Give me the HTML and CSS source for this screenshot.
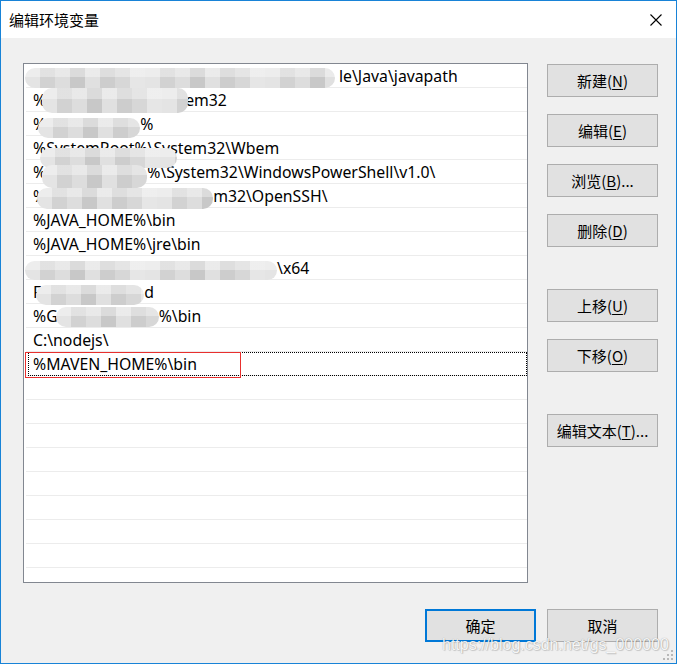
FILE: index.html
```html
<!DOCTYPE html>
<html lang="zh-CN">
<head>
<meta charset="utf-8">
<title>编辑环境变量</title>
<link rel="stylesheet" href="styles.css">
</head>
<body>
<div class="window">
  <div class="titlebar">
    <span class="title">编辑环境变量</span>
    <svg class="close" width="12" height="12" viewBox="0 0 12 12"><path d="M0.5 0.5 L11.5 11.5 M11.5 0.5 L0.5 11.5" stroke="#000" stroke-width="1.1" fill="none"/></svg>
  </div>
  <div class="body">
    <div class="main">
      <div class="list">
        <div class="row"><span class="blur b1"></span><span>le\Java\javapath</span></div>
        <div class="row"><span>%</span><span class="blur b2"></span><span>em32</span></div>
        <div class="row"><span>%</span><span class="blur b3"></span><span>%</span></div>
        <div class="row"><span>%SystemRoot%\System32\Wbem</span><span class="blur b4"></span></div>
        <div class="row"><span>%</span><span class="blur b5"></span><span>%\System32\WindowsPowerShell\v1.0\</span></div>
        <div class="row"><span>%</span><span class="blur b6"></span><span>m32\OpenSSH\</span></div>
        <div class="row"><span>%JAVA_HOME%\bin</span></div>
        <div class="row"><span>%JAVA_HOME%\jre\bin</span></div>
        <div class="row"><span class="blur b9"></span><span>\x64</span></div>
        <div class="row"><span>F</span><span class="blur b10"></span><span>d</span></div>
        <div class="row"><span>%G</span><span class="blur b11"></span><span>%\bin</span></div>
        <div class="row"><span>C:\nodejs\</span></div>
        <div class="row focused"><span>%MAVEN_HOME%\bin</span><span class="mark"></span></div>
        <div class="row"></div>
        <div class="row"></div>
        <div class="row"></div>
        <div class="row"></div>
        <div class="row"></div>
        <div class="row"></div>
        <div class="row"></div>
        <div class="row"></div>
      </div>
      <div class="side">
        <div class="group">
          <button class="btn">新建(<u>N</u>)</button>
          <button class="btn">编辑(<u>E</u>)</button>
          <button class="btn">浏览(<u>B</u>)...</button>
          <button class="btn">删除(<u>D</u>)</button>
        </div>
        <div class="group">
          <button class="btn">上移(<u>U</u>)</button>
          <button class="btn">下移(<u>O</u>)</button>
        </div>
        <div class="group">
          <button class="btn">编辑文本(<u>T</u>)...</button>
        </div>
      </div>
    </div>
    <div class="footer">
      <button class="btn default">确定</button>
      <button class="btn">取消</button>
    </div>
  </div>
  <div class="watermark">https://blog.csdn.net/gs_000000</div>
  <svg class="grip" width="12" height="12" viewBox="0 0 12 12">
    <rect x="9" y="1" width="2" height="2" fill="#b8b8b8"/>
    <rect x="5" y="5" width="2" height="2" fill="#b8b8b8"/>
    <rect x="9" y="5" width="2" height="2" fill="#b8b8b8"/>
    <rect x="1" y="9" width="2" height="2" fill="#b8b8b8"/>
    <rect x="5" y="9" width="2" height="2" fill="#b8b8b8"/>
    <rect x="9" y="9" width="2" height="2" fill="#b8b8b8"/>
  </svg>
</div>
</body>
</html>
```

FILE: styles.css
```css
html, body {
  margin: 0;
  padding: 0;
  background: #f0f0f0;
}

.window {
  width: 677px;
  height: 664px;
  box-sizing: border-box;
  border: 1px solid #1883d7;
  background: #f0f0f0;
  display: flex;
  flex-direction: column;
  position: relative;
  overflow: hidden;
  font-family: "Noto Sans", "Noto Sans CJK SC", sans-serif;
  color: #000;
}

.titlebar {
  height: 37px;
  background: #fff;
  display: flex;
  align-items: center;
  justify-content: space-between;
  padding: 0 14px 0 8px;
  flex: none;
}

.title {
  font-family: "Noto Sans CJK SC", sans-serif;
  font-size: 15px;
  line-height: 18px;
}

.close {
  display: block;
}

.body {
  flex: 1;
  display: flex;
  flex-direction: column;
  padding: 25px 18px 0 22px;
}

.main {
  display: flex;
  gap: 19px;
}

.list {
  width: 505px;
  height: 520px;
  box-sizing: border-box;
  border: 1px solid #828790;
  background: #fff;
  overflow: hidden;
  flex: none;
}

.row {
  position: relative;
  height: 24px;
  box-sizing: border-box;
  margin-left: 2px;
  padding-left: 7px;
  border-bottom: 1px solid #ececec;
  display: flex;
  align-items: center;
  font-size: 15.8px;
  line-height: 20px;
  white-space: nowrap;
}

.blur {
  display: block;
  flex: none;
  align-self: flex-start;
  position: relative;
  z-index: 1;
  border-radius: 10px;
  background:
    linear-gradient(rgba(255,255,255,0.35) 0 45%, rgba(255,255,255,0) 45%),
    repeating-linear-gradient(90deg, #e4e4e4 0 15px, #d2d2d2 15px 30px, #dddddd 30px 45px, #c8c8c8 45px 60px, #e0e0e0 60px 75px, #cdcdcd 75px 90px, #d7d7d7 90px 105px, #e6e6e6 105px 120px);
  filter: blur(0.7px);
}

.b1 { margin-left: -8px; margin-right: 4px; margin-top: 4px; width: 310px; height: 20px; }
.b2 { margin-left: -4px; margin-top: 0; width: 146px; height: 25px; margin-right: -3px; }
.b3 { margin-left: -8px; margin-top: 6px; width: 102px; height: 20px; }
.b4 { position: absolute; left: 14px; top: 12px; width: 137px; height: 20px; }
.b5 { margin-left: -4px; margin-top: 5px; width: 105px; height: 23px; }
.b6 { margin-left: -9px; margin-top: 4px; width: 176px; height: 21px; }
.b9 { margin-left: -8px; margin-top: 5px; width: 252px; height: 19px; }
.b10 { margin-left: -5px; margin-top: 5px; width: 108px; height: 20px; }
.b11 { margin-left: -2px; margin-top: 3px; width: 103px; height: 20px; }

.focused::before {
  content: "";
  position: absolute;
  left: 2px;
  right: 0;
  top: 0;
  bottom: -1px;
  border: 1px dotted #000;
  box-sizing: border-box;
}

.mark {
  position: absolute;
  left: -1px;
  top: 0;
  width: 216px;
  height: 26px;
  box-sizing: border-box;
  border: 1px solid #e8302e;
  z-index: 2;
}

.side {
  display: flex;
  flex-direction: column;
  gap: 42px;
  padding-top: 1px;
}

.group {
  display: flex;
  flex-direction: column;
  gap: 17px;
}

.btn {
  width: 111px;
  height: 33px;
  box-sizing: border-box;
  border: 1px solid #adadad;
  background: #e1e1e1;
  font-family: "Noto Sans CJK SC", sans-serif;
  font-size: 15px;
  color: #000;
  padding: 0;
  margin: 0;
  display: flex;
  align-items: center;
  justify-content: center;
  line-height: 18px;
}

.btn u {
  text-underline-offset: 2px;
}

.btn.default {
  border: 2px solid #0078d7;
}

.footer {
  margin-top: 26px;
  display: flex;
  justify-content: flex-end;
  gap: 11px;
}

.watermark {
  position: absolute;
  left: 441px;
  top: 634px;
  font-family: "Liberation Sans", Arial, sans-serif;
  font-size: 16px;
  line-height: 20px;
  color: rgba(255, 255, 255, 0.92);
  text-shadow: 0 0 1px rgba(0, 0, 0, 0.35), 1px 1px 1px rgba(0, 0, 0, 0.15);
  white-space: nowrap;
  z-index: 3;
}

.grip {
  position: absolute;
  right: 2px;
  bottom: 2px;
}
```
